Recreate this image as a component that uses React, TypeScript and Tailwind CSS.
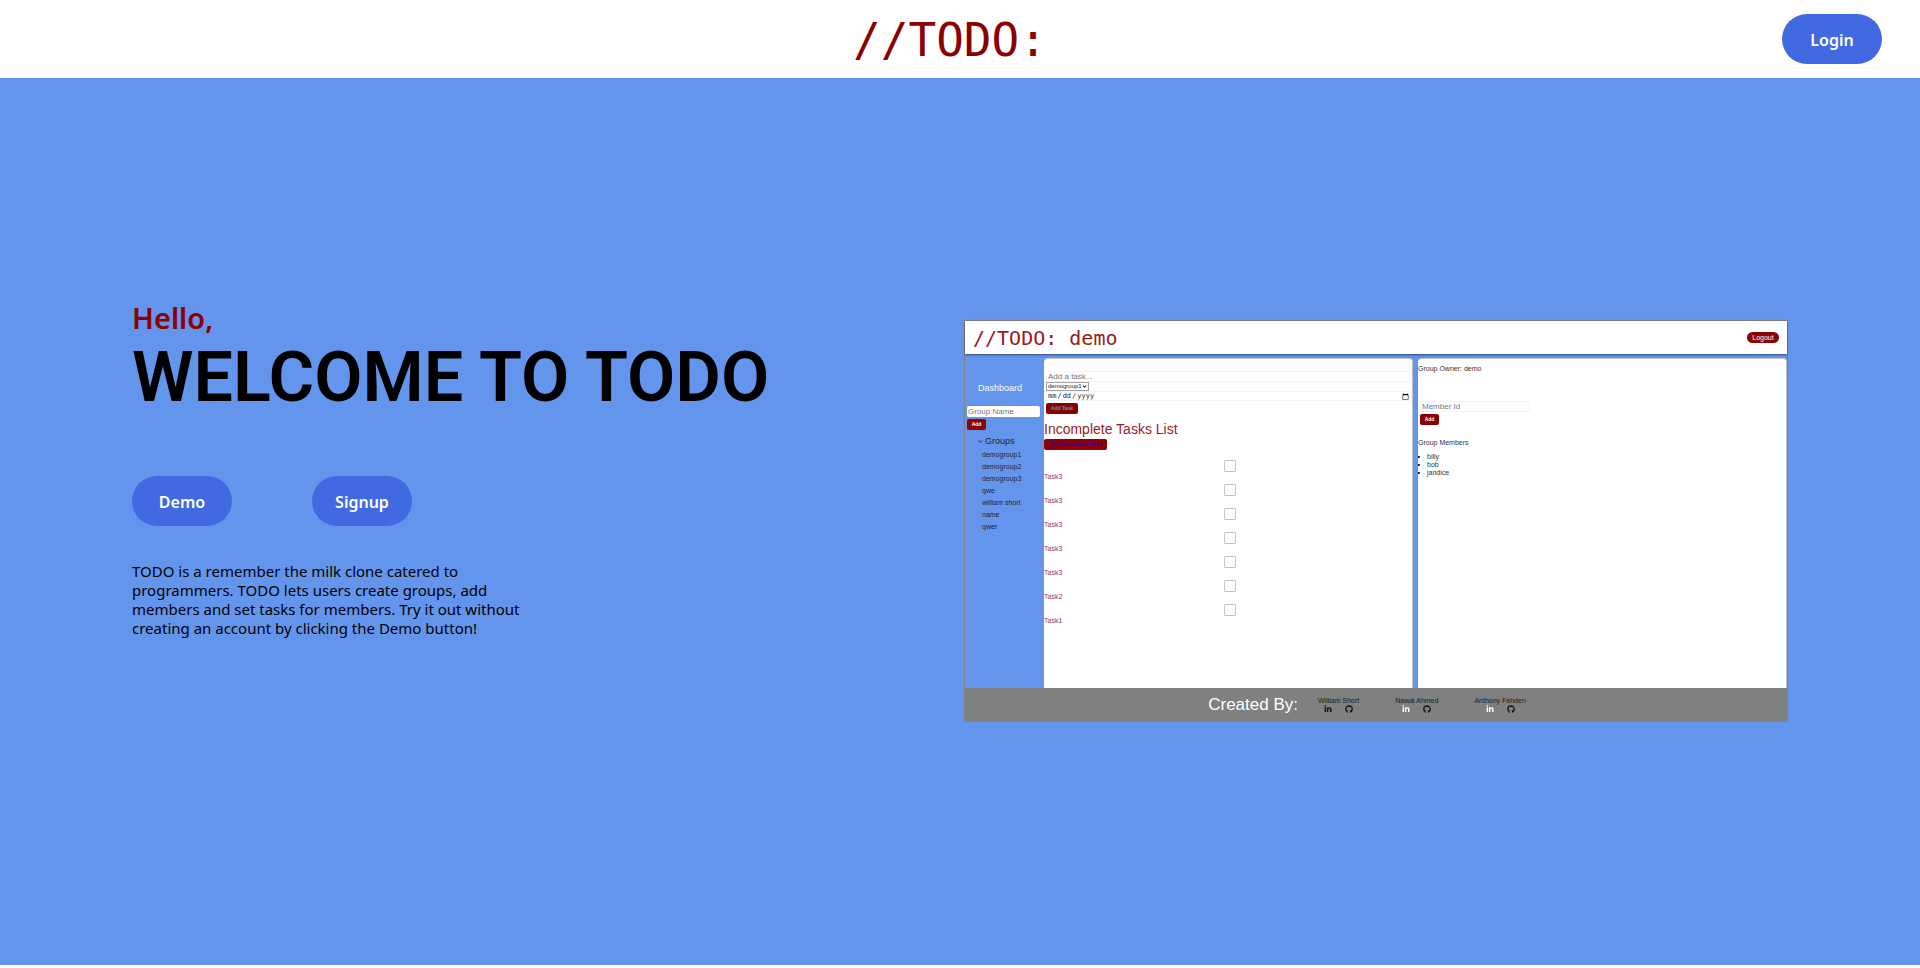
import { FaGithub, FaLinkedinIn } from "react-icons/fa";
import { ChevronDown } from "lucide-react";

const groups = ["demogroup1", "demogroup2", "demogroup3", "qwe", "william short", "name", "qwer"];
const tasks = ["Task3", "Task3", "Task3", "Task3", "Task3", "Task2", "Task1"];
const members = ["billy", "bob", "jandice"];
const authors = [
  { name: "William Short", linkedin: "text-[#111111]" },
  { name: "Nawal Ahmed", linkedin: "text-white" },
  { name: "Anthony Fahden", linkedin: "text-white" },
];

function PillButton({ label }: { label: string }) {
  return (
    <button
      type="button"
      className="h-[50px] w-[100px] rounded-[25px] bg-[#4169e1] pt-0.5 text-[16px] font-semibold text-white"
    >
      {label}
    </button>
  );
}

function Sidebar() {
  return (
    <aside className="w-[79px] shrink-0 pt-[24px]">
      <h3 className="ml-[13px] text-[9px] leading-[12px] text-white">Dashboard</h3>
      <input
        aria-label="Group name"
        placeholder="Group Name"
        className="mt-3 ml-0.5 block h-[11px] w-[73px] rounded-[2px] bg-white px-px text-[8px] placeholder:text-[#757575]"
      />
      <button
        type="button"
        className="mt-0.5 ml-0.5 block h-[11px] w-[19px] rounded-[2px] bg-[#8b0000] text-[5px] leading-[11px] font-bold text-white"
      >
        Add
      </button>
      <div className="mt-[5px] ml-3 flex items-center gap-px text-[9px] leading-[12px] text-[#222222]">
        <ChevronDown size={7} strokeWidth={3} />
        <span>Groups</span>
      </div>
      <ul className="mt-0.5 ml-[17px] text-[7px] leading-[12px] text-[#1c2536]">
        {groups.map((g) => (
          <li key={g}>{g}</li>
        ))}
      </ul>
    </aside>
  );
}

function TaskPanel() {
  return (
    <section className="min-w-0 flex-1 rounded-t-[4px] border-t border-r border-[#c4c4c4] bg-white pt-3">
      <div className="pl-0.5">
        <input
          aria-label="Task"
          placeholder="Add a task..."
          className="block h-[11px] w-full border border-[#f3f3fc] px-px text-[8px] placeholder:text-[#757575]"
        />
        <div className="relative w-[43px]">
          <select
            aria-label="Group"
            className="block h-[9px] w-full appearance-none border border-[#a0a0a0] bg-white pl-px text-[6px] leading-[7px] text-[#222222]"
          >
            <option>demogroup1</option>
          </select>
          <ChevronDown
            size={5}
            strokeWidth={5}
            className="pointer-events-none absolute top-0.5 right-0.5 text-[#222222]"
          />
        </div>
        <div className="h-[10px] border border-[#f3f3fc]">
          <input
            aria-label="Due date"
            type="date"
            className="block h-[8px] w-full font-['DejaVu_Sans_Mono',monospace] text-[7px] leading-[8px] text-[#222222]"
          />
        </div>
        <button
          type="button"
          className="mt-0.5 block h-[11px] w-[32px] rounded-[2px] bg-[#8b0000] text-[5px] leading-[11px] font-bold text-[#5f9ea0]"
        >
          Add Task
        </button>
      </div>
      <h2 className="mt-[7px] text-[14px] leading-[16px] text-[#991b1b]">Incomplete Tasks List</h2>
      <button
        type="button"
        className="mt-0.5 block h-[11px] w-[63px] rounded-[2px] bg-[#8b0000] text-[5px] leading-[11px] font-bold text-[#2a00d8]"
      >
        Show Complete Tasks
      </button>
      <ul className="mt-[10px]">
        {tasks.map((t, i) => (
          <li key={i} className="h-6">
            <label className="block text-[7px] leading-[9px] text-[#a03030]">
              <span className="flex justify-center pl-[3px]">
                <input
                  type="checkbox"
                  className="block size-[12px] appearance-none rounded-[1px] border border-[#c4c4c4] bg-white"
                />
              </span>
              {t}
            </label>
          </li>
        ))}
      </ul>
    </section>
  );
}

function MemberPanel() {
  return (
    <section className="min-w-0 flex-1 overflow-hidden rounded-t-[4px] border-t border-r border-[#c4c4c4] bg-white pt-1 text-[7px] leading-[12px] text-[#333333]">
      <p>Group Owner: demo</p>
      <input
        aria-label="Member id"
        placeholder="Member Id"
        className="mt-[26px] ml-0.5 block h-[11px] w-[110px] border border-[#f3f3fc] px-px text-[8px] placeholder:text-[#757575]"
      />
      <button
        type="button"
        className="mt-0.5 ml-0.5 block h-[11px] w-[19px] rounded-[2px] bg-[#8b0000] text-[5px] leading-[11px] font-bold text-white"
      >
        Add
      </button>
      <p className="mt-3">Group Members</p>
      <ul className="mt-1 leading-[8px]">
        {members.map((m) => (
          <li
            key={m}
            className="flex items-center gap-[7px] before:h-0.5 before:w-0.5 before:rounded-r-full before:bg-[#111111]"
          >
            {m}
          </li>
        ))}
      </ul>
    </section>
  );
}

function AppPreview() {
  return (
    <div className="flex h-[402px] flex-col border border-[#808080] bg-[#6495ed] font-['Liberation_Sans',sans-serif]">
      <div className="flex h-[33px] shrink-0 items-center justify-between bg-white pr-2 pl-2 shadow-[0_1px_2px_rgba(0,0,0,0.5)]">
        <span className="font-['DejaVu_Sans_Mono',monospace] text-[20px] leading-[24px] text-[#991b1b]">
          //TODO: demo
        </span>
        <button
          type="button"
          className="h-[11px] w-[32px] rounded-[6px] bg-[#8b0000] text-[7px] leading-[11px] text-white"
        >
          Logout
        </button>
      </div>
      <div className="flex min-h-0 flex-1 pt-1">
        <Sidebar />
        <div className="flex min-w-0 flex-1 gap-[5px]">
          <TaskPanel />
          <MemberPanel />
        </div>
      </div>
      <div className="flex h-[33px] shrink-0 items-center justify-center bg-[#808080] pr-[18px] text-[#1c1c1c]">
        <span className="text-[17px] leading-[20px] text-white">Created By:</span>
        <div className="ml-5 flex gap-9">
          {authors.map((a) => (
            <div key={a.name} className="text-[7px] leading-[8px]">
              <div>{a.name}</div>
              <div className="flex justify-center gap-[13px]">
                <a href="#linkedin" aria-label={`${a.name} on LinkedIn`} className={a.linkedin}>
                  <FaLinkedinIn size={8} />
                </a>
                <a href="#github" aria-label={`${a.name} on GitHub`} className="text-[#111111]">
                  <FaGithub size={8} />
                </a>
              </div>
            </div>
          ))}
        </div>
      </div>
    </div>
  );
}

export default function App() {
  return (
    <div className="flex min-h-screen flex-col bg-white pb-[3px] font-['Noto_Sans','Open_Sans',sans-serif] text-black">
      <header className="grid h-[78px] shrink-0 grid-cols-[1fr_auto_1fr] items-center px-[38px]">
        <h1 className="col-start-2 pt-0.5 pr-5 font-['DejaVu_Sans_Mono',monospace] text-[46px] leading-[54px] text-[#8b0000]">
          //TODO:
        </h1>
        <div className="flex justify-end">
          <PillButton label="Login" />
        </div>
      </header>
      <main className="grid flex-1 grid-cols-2 items-center gap-2 bg-[#6495ed] px-[132px] pb-px">
        <div className="self-start pt-[221px]">
          <p className="text-[29px] leading-[38px] font-semibold text-[#8b0000]">Hello,</p>
          <h2 className="font-[Roboto,sans-serif] text-[70px] leading-[80px] font-semibold whitespace-nowrap">
            WELCOME TO TODO
          </h2>
          <div className="mt-[59px] flex gap-20">
            <PillButton label="Demo" />
            <PillButton label="Signup" />
          </div>
          <p className="mt-9 max-w-[404px] text-[15px] leading-[19px]">
            TODO is a remember the milk clone catered to programmers. TODO lets users create groups, add members and
            set tasks for members. Try it out without creating an account by clicking the Demo button!
          </p>
        </div>
        <AppPreview />
      </main>
    </div>
  );
}
